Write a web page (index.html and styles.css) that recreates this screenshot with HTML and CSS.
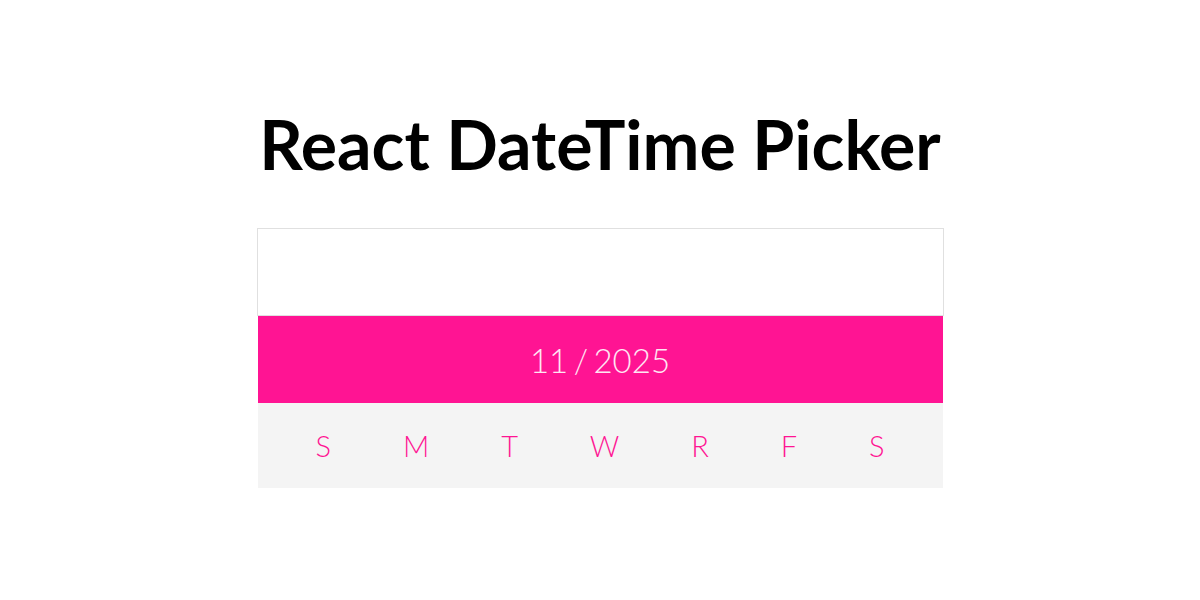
FILE: index.html
```html
<!DOCTYPE html>
<html>
<head>
<meta charset="utf-8">
<link rel="stylesheet" href="styles.css">
</head>
<body>
<div class="app">
  <h1 class="title">React DateTime Picker</h1>
  <div class="picker">
    <input class="picker-input" type="text">
    <div class="calendar">
      <div class="month">11 / 2025</div>
      <div class="weekdays">
        <span>S</span><span>M</span><span>T</span><span>W</span><span>R</span><span>F</span><span>S</span>
      </div>
    </div>
  </div>
</div>
</body>
</html>
```
FILE: styles.css
```css
html, body {
  margin: 0;
  padding: 0;
  background: #fff;
}
body {
  font-family: Lato, "Open Sans", sans-serif;
}
.app {
  display: flex;
  flex-direction: column;
  align-items: center;
  padding-top: 100px;
}
.title {
  margin: 0;
  font-size: 68px;
  font-weight: 700;
  line-height: 88px;
  color: #000;
}
.picker {
  margin-top: 40px;
  width: 687px;
}
.picker-input {
  display: block;
  width: 100%;
  height: 88px;
  box-sizing: border-box;
  border: 1px solid #e0e0e0;
  outline: none;
  margin: 0;
  padding: 0;
  background: #fff;
}
.calendar {
  display: flex;
  flex-direction: column;
  margin: 0 1px;
}
.month {
  height: 87px;
  background: #ff1493;
  color: #ffe6f3;
  font-size: 33px;
  font-weight: 300;
  word-spacing: -3.5px;
  display: flex;
  align-items: center;
  justify-content: center;
}
.weekdays {
  height: 85px;
  background: #f4f4f4;
  display: flex;
  justify-content: space-around;
  padding: 0 22px;
  align-items: center;
  color: #ff1493;
  font-size: 29px;
  font-weight: 300;
}
```
